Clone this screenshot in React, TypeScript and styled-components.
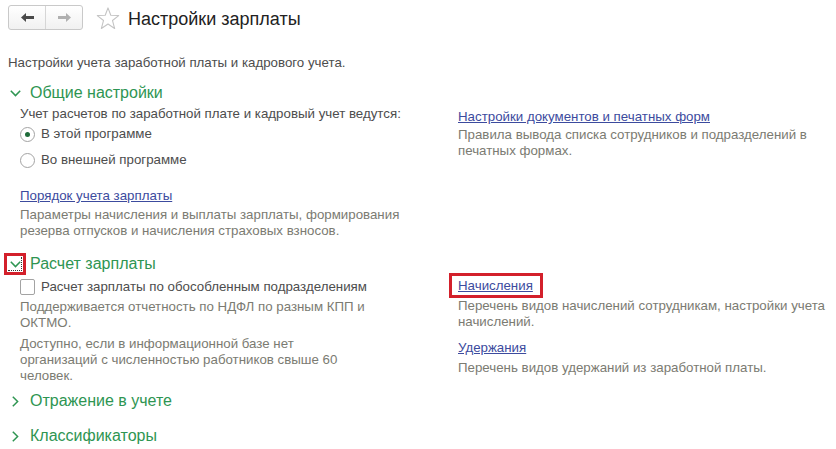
import React from 'react'
import styled, {createGlobalStyle} from 'styled-components'

const GlobalStyle = createGlobalStyle`
    body {
        margin: 0;
        background: #fff;
        font-family: "Liberation Sans", Arial, sans-serif;
        font-size: 13.3px;
        color: #4d4d4d;
    }
`

const green = '#2e9552'
const linkBlue = '#3c4b9e'
const muted = '#7b7b72'

const Page = styled.div`
    padding: 0 8px;
    width: 820px;
`

const TopBar = styled.div`
    display: flex;
    align-items: center;
    height: 36px;
`

const NavGroup = styled.div`
    display: flex;
    height: 25px;
    margin-top: -1px;
    border: 1px solid #c9c9c9;
    border-radius: 3px;
    background: linear-gradient(#ffffff, #f1f1f1);
    box-sizing: border-box;
`

const NavButton = styled.div<{ $divider?: boolean }>`
    width: 36px;
    display: flex;
    align-items: center;
    justify-content: center;
    border-left: ${({$divider}) => $divider ? '1px solid #d6d6d6' : 'none'};
`

const StarBox = styled.div`
    display: flex;
    margin: 0 8px 0 13px;
`

const Title = styled.h1`
    margin: 0;
    font-size: 18px;
    font-weight: normal;
    color: #222;
    line-height: 22px;
    margin-top: 2px;
`

const Intro = styled.div`
    margin-top: 19px;
    line-height: 16px;
    color: #4d4d4d;
`

const Section = styled.div<{ $gap: number }>`
    margin-top: ${({$gap}) => $gap}px;
`

const SectionHeader = styled.div`
    display: flex;
    align-items: center;
    height: 22px;
    color: ${green};
    font-size: 16px;
`

const Toggle = styled.div<{ $focused?: boolean }>`
    position: relative;
    width: 22px;
    height: 22px;
    margin-left: -4px;
    margin-right: 4px;
    display: flex;
    align-items: center;
    justify-content: center;
    box-sizing: border-box;
    border: ${({$focused}) => $focused ? '3px solid #d3202b' : 'none'};
    &::after {
        content: '';
        display: ${({$focused}) => $focused ? 'block' : 'none'};
        position: absolute;
        inset: 1px;
        border-right: 1px dotted #333;
        border-bottom: 1px dotted #333;
    }
`

const SectionBody = styled.div`
    display: grid;
    grid-template-columns: 438px 1fr;
    padding: 2px 0 0 12px;
`

const Column = styled.div<{ $offset?: number }>`
    padding-top: ${({$offset}) => $offset || 0}px;
    line-height: 16px;
`

const Label = styled.div`
    color: #4d4d4d;
    margin-bottom: -1px;
`

const OptionRow = styled.div`
    display: flex;
    align-items: center;
    height: 26px;
    color: #4d4d4d;
`

const Radio = styled.span<{ $checked?: boolean }>`
    width: 13px;
    height: 13px;
    border: 1px solid #a3a3a3;
    border-radius: 50%;
    margin-right: 6px;
    display: flex;
    align-items: center;
    justify-content: center;
    background: #fff;
    &::after {
        content: '';
        width: 5px;
        height: 5px;
        border-radius: 50%;
        background: ${({$checked}) => $checked ? '#1f6b3a' : 'transparent'};
    }
`

const CheckRow = styled.div`
    display: flex;
    align-items: center;
    height: 18px;
    margin-top: 1px;
    color: #4d4d4d;
`

const Checkbox = styled.span`
    width: 13px;
    height: 14px;
    border: 1px solid #a3a3a3;
    border-radius: 2px;
    margin-right: 6px;
    background: #fff;
`

const Link = styled.a<{ $space?: number }>`
    display: inline-block;
    position: relative;
    margin-top: ${({$space}) => $space || 0}px;
    color: ${linkBlue};
    text-decoration: underline;
    cursor: pointer;
`

const Highlight = styled.span`
    position: relative;
    &::after {
        content: '';
        position: absolute;
        left: -9px;
        right: -10px;
        top: -5px;
        bottom: -5px;
        border: 3px solid #d3202b;
    }
`

const Hint = styled.div<{ $space?: number }>`
    margin-top: ${({$space}) => $space || 0}px;
    color: ${muted};
    white-space: nowrap;
`

const ArrowIcon = ({dir, color}: {dir: 'left' | 'right', color: string}) => (
    <svg width="13" height="9" viewBox="0 0 13 9">
        <g transform={dir === 'right' ? 'matrix(-1 0 0 1 13 0)' : undefined} fill={color}>
            <polygon points="0,4.5 5,0 5,9" />
            <rect x="4" y="3" width="9" height="3" />
        </g>
    </svg>
)

const StarIcon = () => (
    <svg width="24" height="23" viewBox="0 0 22 21">
        <polygon
            points="11,0.8 13.55,7.5 20.8,7.8 15.1,12.3 17.1,19.7 11,15.5 4.9,19.7 6.9,12.3 1.2,7.8 8.45,7.5"
            fill="none"
            stroke="#c4c4c4"
            strokeWidth="1"
            strokeLinejoin="round"
        />
    </svg>
)

const ChevronDown = () => (
    <svg width="11" height="7" viewBox="0 0 11 7">
        <polyline points="0.8,0.8 5.5,5.6 10.2,0.8" fill="none" stroke={green} strokeWidth="1.5" />
    </svg>
)

const ChevronRight = () => (
    <svg width="7" height="11" viewBox="0 0 7 11">
        <polyline points="0.8,0.8 5.6,5.5 0.8,10.2" fill="none" stroke={green} strokeWidth="1.5" />
    </svg>
)

const App: React.FC = () => {
    return (
        <Page>
            <GlobalStyle />
            <TopBar>
                <NavGroup>
                    <NavButton><ArrowIcon dir="left" color="#4a4a4a" /></NavButton>
                    <NavButton $divider><ArrowIcon dir="right" color="#b0b0b0" /></NavButton>
                </NavGroup>
                <StarBox><StarIcon /></StarBox>
                <Title>Настройки зарплаты</Title>
            </TopBar>

            <Intro>Настройки учета заработной платы и кадрового учета.</Intro>

            <Section $gap={11}>
                <SectionHeader>
                    <Toggle><ChevronDown /></Toggle>
                    Общие настройки
                </SectionHeader>
                <SectionBody>
                    <Column>
                        <Label>Учет расчетов по заработной плате и кадровый учет ведутся:</Label>
                        <OptionRow><Radio $checked />В этой программе</OptionRow>
                        <OptionRow><Radio />Во внешней программе</OptionRow>
                        <Link $space={15}>Порядок учета зарплаты</Link>
                        <Hint $space={3}>
                            Параметры начисления и выплаты зарплаты, формирования<br />
                            резерва отпусков и начисления страховых взносов.
                        </Hint>
                    </Column>
                    <Column $offset={3}>
                        <Link>Настройки документов и печатных форм</Link>
                        <Hint $space={2}>
                            Правила вывода списка сотрудников и подразделений в<br />
                            печатных формах.
                        </Hint>
                    </Column>
                </SectionBody>
            </Section>

            <Section $gap={14}>
                <SectionHeader>
                    <Toggle $focused><ChevronDown /></Toggle>
                    Расчет зарплаты
                </SectionHeader>
                <SectionBody>
                    <Column>
                        <CheckRow><Checkbox />Расчет зарплаты по обособленным подразделениям</CheckRow>
                        <Hint $space={3}>
                            Поддерживается отчетность по НДФЛ по разным КПП и<br />
                            ОКТМО.
                        </Hint>
                        <Hint $space={5}>
                            Доступно, если в информационной базе нет<br />
                            организаций с численностью работников свыше 60<br />
                            человек.
                        </Hint>
                    </Column>
                    <Column $offset={1}>
                        <Link><Highlight>Начисления</Highlight></Link>
                        <Hint $space={4}>
                            Перечень видов начислений сотрудникам, настройки учета<br />
                            начислений.
                        </Hint>
                        <Link $space={10}>Удержания</Link>
                        <Hint $space={4}>Перечень видов удержаний из заработной платы.</Hint>
                    </Column>
                </SectionBody>
            </Section>

            <Section $gap={6}>
                <SectionHeader>
                    <Toggle><ChevronRight /></Toggle>
                    Отражение в учете
                </SectionHeader>
            </Section>

            <Section $gap={13}>
                <SectionHeader>
                    <Toggle><ChevronRight /></Toggle>
                    Классификаторы
                </SectionHeader>
            </Section>
        </Page>
    )
}

export default App
